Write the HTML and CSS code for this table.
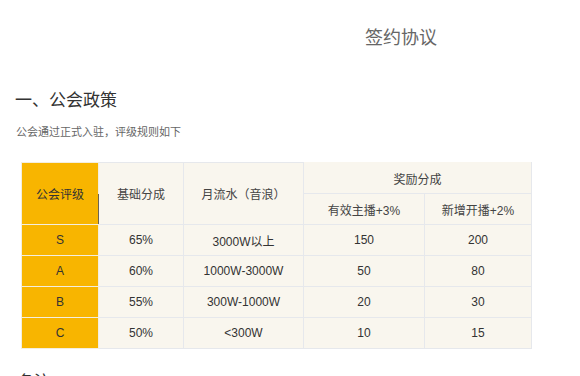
FILE: index.html
```html
<!DOCTYPE html>
<html lang="zh-CN">
<head>
<meta charset="utf-8">
<title>签约协议</title>
<link rel="stylesheet" href="styles.css">
</head>
<body>
<div class="page">
  <h1 class="title">签约协议</h1>
  <h2 class="section">一、公会政策</h2>
  <p class="desc">公会通过正式入驻，评级规则如下</p>
  <table class="grade">
    <colgroup>
      <col class="c1"><col class="c2"><col class="c3"><col class="c4"><col class="c5">
    </colgroup>
    <thead>
      <tr>
        <th rowspan="2" class="gold lead">公会评级</th>
        <th rowspan="2">基础分成</th>
        <th rowspan="2">月流水（音浪）</th>
        <th colspan="2" class="reward">奖励分成</th>
      </tr>
      <tr>
        <th>有效主播+3%</th>
        <th>新增开播+2%</th>
      </tr>
    </thead>
    <tbody>
      <tr><td class="gold">S</td><td>65%</td><td>3000W以上</td><td>150</td><td>200</td></tr>
      <tr><td class="gold">A</td><td>60%</td><td>1000W-3000W</td><td>50</td><td>80</td></tr>
      <tr><td class="gold">B</td><td>55%</td><td>300W-1000W</td><td>20</td><td>30</td></tr>
      <tr><td class="gold">C</td><td>50%</td><td>&lt;300W</td><td>10</td><td>15</td></tr>
    </tbody>
  </table>
  <h3 class="note">备注</h3>
</div>
</body>
</html>
```
FILE: styles.css
```css
html, body {
  margin: 0;
  padding: 0;
  background: #ffffff;
}
body {
  font-family: "Liberation Sans", "Noto Sans CJK SC", sans-serif;
  color: #333333;
}
.page {
  display: flex;
  flex-direction: column;
  align-items: flex-start;
}
.title {
  margin: 0;
  padding: 26px 0 0 365px;
  font-size: 18px;
  line-height: 24px;
  font-weight: normal;
  color: #666666;
}
.section {
  margin: 37px 0 0 15px;
  font-size: 17px;
  line-height: 28px;
  font-weight: normal;
  color: #333333;
}
.desc {
  margin: 8px 0 0 16px;
  font-size: 11px;
  line-height: 18px;
  color: #666666;
}
.grade {
  margin: 21px 0 0 21px;
  border-collapse: collapse;
  table-layout: fixed;
  width: 510px;
  background: #f9f6ee;
}
.c1 { width: 77px; }
.c2 { width: 85px; }
.c3 { width: 120px; }
.c4 { width: 121px; }
.c5 { width: 107px; }
.grade th,
.grade td {
  height: 30px;
  padding: 0;
  border: 1px solid #e6e8ec;
  text-align: center;
  vertical-align: middle;
  font-size: 12px;
  font-weight: normal;
  color: #333333;
}
.grade th {
  color: #444444;
}
.grade .gold {
  background: #f8b500;
  border-color: #f3eee0;
  color: #333333;
}
.grade .lead {
  position: relative;
}
.grade .lead::after {
  content: "";
  position: absolute;
  right: -1px;
  bottom: 0;
  width: 1px;
  height: 30px;
  background: #6b6455;
}
.grade .reward {
  border-top-color: #f9f6ee;
}
.note {
  margin: 22px 0 0 18px;
  font-size: 16px;
  line-height: 22px;
  font-weight: normal;
  color: #333333;
}
```
